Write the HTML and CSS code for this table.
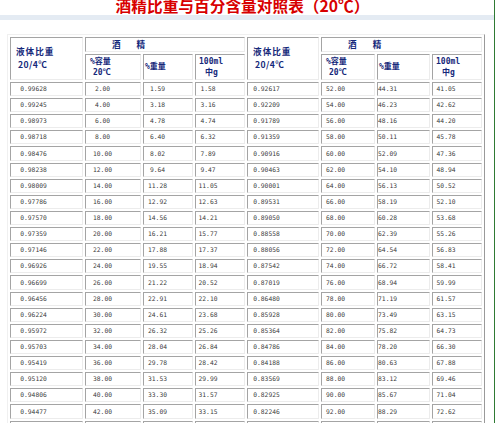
FILE: index.html
```html
<!DOCTYPE html>
<html lang="zh-CN">
<head>
<meta charset="utf-8">
<title>酒精比重与百分含量对照表</title>
<link rel="stylesheet" href="styles.css">
</head>
<body>
<div class="page">
  <h1 class="title">酒精比重与百分含量对照表（20℃）</h1>
  <div class="band"></div>
  <table class="chart">
    <colgroup>
      <col class="c-sg"><col class="c-vol"><col class="c-wt"><col class="c-g">
      <col class="c-sg2"><col class="c-vol2"><col class="c-wt2"><col class="c-g2">
    </colgroup>
    <thead>
      <tr class="hrow1">
        <th rowspan="2" class="h-sg">液体比重<br><span class="ind2">20/4℃</span></th>
        <th colspan="3" class="h-alc"><span>酒</span><span class="gap">精</span></th>
        <th rowspan="2" class="h-sg">液体比重<br><span class="ind2">20/4℃</span></th>
        <th colspan="3" class="h-alc"><span>酒</span><span class="gap">精</span></th>
      </tr>
      <tr class="hrow2">
        <th class="h-vol">%容量<br><span class="ind3">20℃</span></th>
        <th class="h-wt">%重量</th>
        <th class="h-g">100ml<br><span class="ind6">中g</span></th>
        <th class="h-vol">%容量<br><span class="ind3">20℃</span></th>
        <th class="h-wt">%重量</th>
        <th class="h-g">100ml<br><span class="ind6">中g</span></th>
      </tr>
    </thead>
    <tbody>
      <tr><td>0.99628</td><td>2.00</td><td>1.59</td><td>1.58</td><td>0.92617</td><td>52.00</td><td>44.31</td><td>41.05</td></tr>
      <tr><td>0.99245</td><td>4.00</td><td>3.18</td><td>3.16</td><td>0.92209</td><td>54.00</td><td>46.23</td><td>42.62</td></tr>
      <tr><td>0.98973</td><td>6.00</td><td>4.78</td><td>4.74</td><td>0.91789</td><td>56.00</td><td>48.16</td><td>44.20</td></tr>
      <tr><td>0.98718</td><td>8.00</td><td>6.40</td><td>6.32</td><td>0.91359</td><td>58.00</td><td>50.11</td><td>45.78</td></tr>
      <tr><td>0.98476</td><td>10.00</td><td>8.02</td><td>7.89</td><td>0.90916</td><td>60.00</td><td>52.09</td><td>47.36</td></tr>
      <tr><td>0.98238</td><td>12.00</td><td>9.64</td><td>9.47</td><td>0.90463</td><td>62.00</td><td>54.10</td><td>48.94</td></tr>
      <tr><td>0.98009</td><td>14.00</td><td>11.28</td><td>11.05</td><td>0.90001</td><td>64.00</td><td>56.13</td><td>50.52</td></tr>
      <tr><td>0.97786</td><td>16.00</td><td>12.92</td><td>12.63</td><td>0.89531</td><td>66.00</td><td>58.19</td><td>52.10</td></tr>
      <tr><td>0.97570</td><td>18.00</td><td>14.56</td><td>14.21</td><td>0.89050</td><td>68.00</td><td>60.28</td><td>53.68</td></tr>
      <tr><td>0.97359</td><td>20.00</td><td>16.21</td><td>15.77</td><td>0.88558</td><td>70.00</td><td>62.39</td><td>55.26</td></tr>
      <tr><td>0.97146</td><td>22.00</td><td>17.88</td><td>17.37</td><td>0.88056</td><td>72.00</td><td>64.54</td><td>56.83</td></tr>
      <tr><td>0.96926</td><td>24.00</td><td>19.55</td><td>18.94</td><td>0.87542</td><td>74.00</td><td>66.72</td><td>58.41</td></tr>
      <tr><td>0.96699</td><td>26.00</td><td>21.22</td><td>20.52</td><td>0.87019</td><td>76.00</td><td>68.94</td><td>59.99</td></tr>
      <tr><td>0.96456</td><td>28.00</td><td>22.91</td><td>22.10</td><td>0.86480</td><td>78.00</td><td>71.19</td><td>61.57</td></tr>
      <tr><td>0.96224</td><td>30.00</td><td>24.61</td><td>23.68</td><td>0.85928</td><td>80.00</td><td>73.49</td><td>63.15</td></tr>
      <tr><td>0.95972</td><td>32.00</td><td>26.32</td><td>25.26</td><td>0.85364</td><td>82.00</td><td>75.82</td><td>64.73</td></tr>
      <tr><td>0.95703</td><td>34.00</td><td>28.04</td><td>26.84</td><td>0.84786</td><td>84.00</td><td>78.20</td><td>66.30</td></tr>
      <tr><td>0.95419</td><td>36.00</td><td>29.78</td><td>28.42</td><td>0.84188</td><td>86.00</td><td>80.63</td><td>67.88</td></tr>
      <tr><td>0.95120</td><td>38.00</td><td>31.53</td><td>29.99</td><td>0.83569</td><td>88.00</td><td>83.12</td><td>69.46</td></tr>
      <tr><td>0.94806</td><td>40.00</td><td>33.30</td><td>31.57</td><td>0.82925</td><td>90.00</td><td>85.67</td><td>71.04</td></tr>
      <tr><td>0.94477</td><td>42.00</td><td>35.09</td><td>33.15</td><td>0.82246</td><td>92.00</td><td>88.29</td><td>72.62</td></tr>
      <tr><td>0.94135</td><td>44.00</td><td>36.89</td><td>34.73</td><td>0.81526</td><td>94.00</td><td>90.98</td><td>74.20</td></tr>
      <tr><td>0.93776</td><td>46.00</td><td>38.72</td><td>36.31</td><td>0.80749</td><td>96.00</td><td>93.79</td><td>75.78</td></tr>
    </tbody>
  </table>
</div>
</body>
</html>
```

FILE: styles.css
```css
html, body {
  margin: 0;
  padding: 0;
  background: #ffffff;
}

.page {
  width: 494px;
  min-height: 423px;
  border-right: 1px solid #2f7a34;
  overflow: hidden;
}

.title {
  width: 485px;
  height: 15px;
  margin: -3px 0 0 0;
  padding: 0;
  text-align: center;
  font-family: "Noto Sans CJK SC", "Noto Sans", sans-serif;
  font-size: 15.7px;
  line-height: 18px;
  font-weight: 700;
  color: #d80000;
  white-space: nowrap;
}

.band {
  height: 5px;
  margin-top: 3px;
  background: #e4ebf3;
}

.chart {
  table-layout: fixed;
  width: 478px;
  margin: 14px 0 0 7px;
  border-collapse: separate;
  border-spacing: 2px;
  border: 1px solid;
  border-color: #f0f0f0 #9a9a9a #9a9a9a #f0f0f0;
  box-sizing: border-box;
}

.c-sg { width: 73px; }
.c-vol { width: 56px; }
.c-wt { width: 50px; }
.c-g { width: 50px; }
.c-sg2 { width: 72px; }
.c-vol2 { width: 54px; }
.c-wt2 { width: 53px; }
.c-g2 { width: 50px; }

.chart th,
.chart td {
  border: 1px solid;
  border-color: #a4a4a4 #ececec #ececec #a4a4a4;
  padding: 0;
  vertical-align: middle;
  overflow: hidden;
  white-space: nowrap;
}

.chart th {
  text-align: left;
  font-family: "DejaVu Sans Mono", "Noto Sans CJK SC", monospace;
  font-weight: 700;
  color: #14287a;
  font-size: 8px;
  line-height: 11px;
}

.hrow1 { height: 14.7px; }
.hrow2 { height: 26.3px; }

.chart th.h-sg {
  padding-left: 5px;
  font-family: "Noto Sans CJK SC", sans-serif;
  font-size: 8.6px;
  letter-spacing: 1px;
  line-height: 13.5px;
}

.h-sg .ind2 {
  padding-left: 2px;
  letter-spacing: 0.4px;
}

.chart th.h-alc {
  padding-left: 26px;
  font-family: "Noto Sans CJK SC", sans-serif;
  font-size: 8.6px;
}

.h-alc .gap { margin-left: 16px; }

.chart th.h-vol { padding-left: 4px; }
.chart th.h-wt { padding-left: 1px; }
.chart th.h-g { padding-left: 3px; }

.ind3 { padding-left: 3px; }
.ind6 { padding-left: 6px; }

.chart tbody tr { height: 14.13px; }

.chart td {
  text-align: center;
  font-family: "DejaVu Sans Mono", "Liberation Mono", monospace;
  font-size: 6.3px;
  line-height: 8px;
  color: #3a3a3a;
}

.chart td:nth-child(1) { padding-right: 26px; }
.chart td:nth-child(2) { padding-right: 21px; }
.chart td:nth-child(3) { padding-right: 21px; }
.chart td:nth-child(4) { padding-right: 24px; }
.chart td:nth-child(5) { padding-right: 33px; }
.chart td:nth-child(6) { padding-right: 25px; }
.chart td:nth-child(7) { padding-right: 32px; }
.chart td:nth-child(8) { padding-right: 22px; }
```
